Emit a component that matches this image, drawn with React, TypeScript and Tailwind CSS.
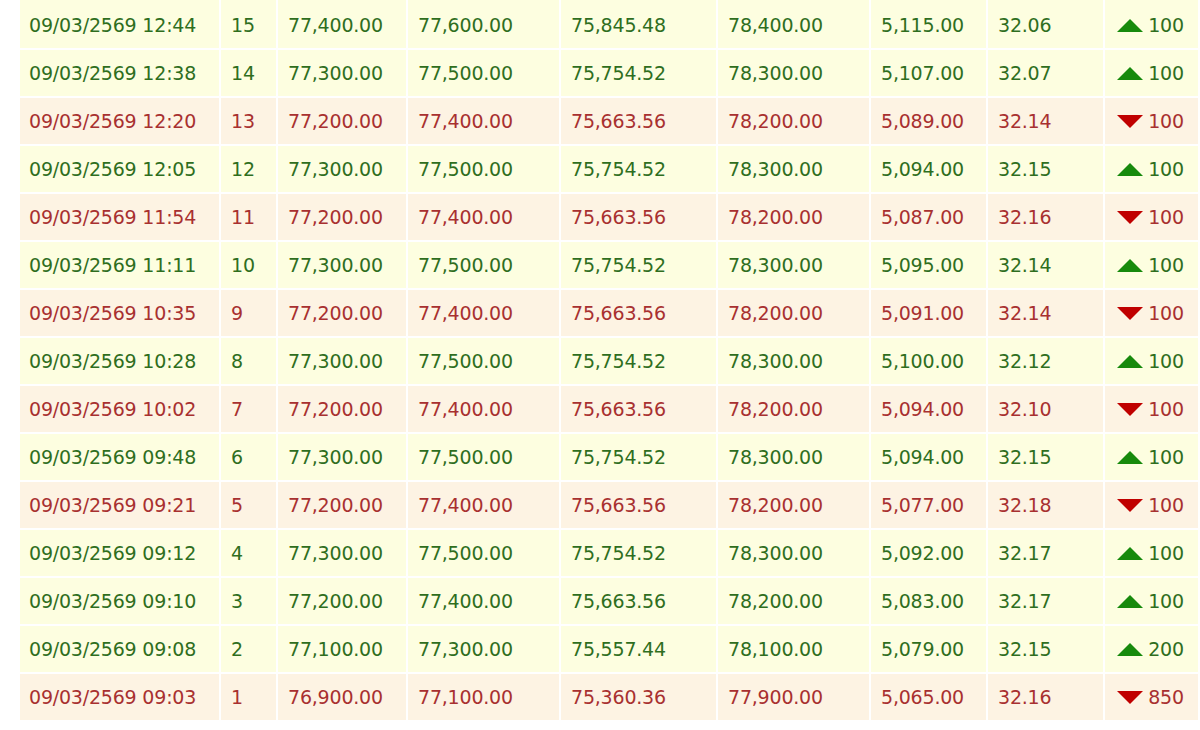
import React from "react";

type Row = [string, string, string, string, string, string, string, string, "u" | "d", string];

const rows: Row[] = [
  ["12:44", "15", "77,400.00", "77,600.00", "75,845.48", "78,400.00", "5,115.00", "32.06", "u", "100"],
  ["12:38", "14", "77,300.00", "77,500.00", "75,754.52", "78,300.00", "5,107.00", "32.07", "u", "100"],
  ["12:20", "13", "77,200.00", "77,400.00", "75,663.56", "78,200.00", "5,089.00", "32.14", "d", "100"],
  ["12:05", "12", "77,300.00", "77,500.00", "75,754.52", "78,300.00", "5,094.00", "32.15", "u", "100"],
  ["11:54", "11", "77,200.00", "77,400.00", "75,663.56", "78,200.00", "5,087.00", "32.16", "d", "100"],
  ["11:11", "10", "77,300.00", "77,500.00", "75,754.52", "78,300.00", "5,095.00", "32.14", "u", "100"],
  ["10:35", "9", "77,200.00", "77,400.00", "75,663.56", "78,200.00", "5,091.00", "32.14", "d", "100"],
  ["10:28", "8", "77,300.00", "77,500.00", "75,754.52", "78,300.00", "5,100.00", "32.12", "u", "100"],
  ["10:02", "7", "77,200.00", "77,400.00", "75,663.56", "78,200.00", "5,094.00", "32.10", "d", "100"],
  ["09:48", "6", "77,300.00", "77,500.00", "75,754.52", "78,300.00", "5,094.00", "32.15", "u", "100"],
  ["09:21", "5", "77,200.00", "77,400.00", "75,663.56", "78,200.00", "5,077.00", "32.18", "d", "100"],
  ["09:12", "4", "77,300.00", "77,500.00", "75,754.52", "78,300.00", "5,092.00", "32.17", "u", "100"],
  ["09:10", "3", "77,200.00", "77,400.00", "75,663.56", "78,200.00", "5,083.00", "32.17", "u", "100"],
  ["09:08", "2", "77,100.00", "77,300.00", "75,557.44", "78,100.00", "5,079.00", "32.15", "u", "200"],
  ["09:03", "1", "76,900.00", "77,100.00", "75,360.36", "77,900.00", "5,065.00", "32.16", "d", "850"],
];

function Tri({ up }: { up: boolean }) {
  return (
    <svg width="26" height="13" viewBox="0 0 26 13" className="shrink-0">
      {up ? (
        <polygon points="13,0 26,13 0,13" fill="#178a0c" />
      ) : (
        <polygon points="0,0 26,0 13,13" fill="#c00000" />
      )}
    </svg>
  );
}

export default function App() {
  return (
    <div className="w-[1200px] h-[730px] bg-white pl-[20px]" style={{ fontFamily: '"DejaVu Sans", sans-serif' }}>
      <div className="flex flex-col gap-[2px] w-[1178px]">
        {rows.map((r, i) => {
          const up = r[8] === "u";
          const bg = up ? "bg-[#fdfee0]" : "bg-[#fdf3e3]";
          const fg = up ? "text-[#2f6e1e]" : "text-[#a83030]";
          const h = i === 0 ? "h-[48px] pt-[2px]" : "h-[46px]";
          const cell = `${bg} ${h} flex items-center pl-[10px] whitespace-nowrap`;
          return (
            <div
              key={i}
              className={`grid grid-cols-[199px_55px_128px_151px_155px_151px_115px_115px_93px] gap-x-[2px] text-[19px] leading-none tracking-[-0.2px] ${fg}`}
            >
              <div className={`${bg} ${h} flex items-center pl-[9px] whitespace-nowrap`}>09/03/2569 {r[0]}</div>
              <div className={cell}>{r[1]}</div>
              <div className={cell}>{r[2]}</div>
              <div className={cell}>{r[3]}</div>
              <div className={cell}>{r[4]}</div>
              <div className={cell}>{r[5]}</div>
              <div className={cell}>{r[6]}</div>
              <div className={cell}>{r[7]}</div>
              <div className={`${bg} ${h} flex items-center justify-center gap-[5px] pr-[2px]`}>
                <Tri up={up} />
                <span>{r[9]}</span>
              </div>
            </div>
          );
        })}
      </div>
    </div>
  );
}
